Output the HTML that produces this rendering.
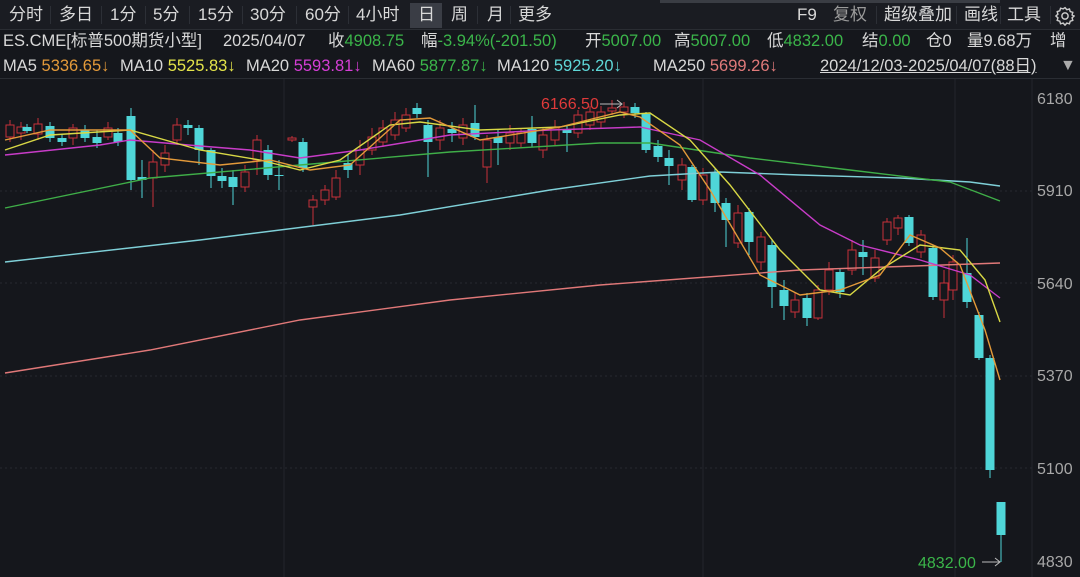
<!DOCTYPE html>
<html><head><meta charset="utf-8">
<style>
*{margin:0;padding:0;box-sizing:border-box}
body{width:1080px;height:577px;background:#15171c;overflow:hidden;position:relative;font-family:"Liberation Sans","Noto Sans CJK SC",sans-serif;color:#d8d8d8;font-size:16.5px}
.t{position:absolute;white-space:nowrap;line-height:22px}
.k{font-size:17px}
.g{color:#3bb54a}.o{color:#e39a3a}.y{color:#e4e44a}.m{color:#d53ed5}.c{color:#5fd8d8}.p{color:#e07a7a}
.sep{position:absolute;top:6px;width:1px;height:18px;background:#2c2f36}
</style></head><body>
<div style="position:absolute;left:0;top:0;width:1080px;height:30px;background:#1a1c22;border-bottom:1px solid #2a2d33"></div>
<div style="position:absolute;left:410px;top:3px;width:32px;height:25px;background:#3a3d45"></div>
<div style="position:absolute;left:660px;top:0;width:340px;height:3px;background:#3a3d44"></div>
<div class="t k" style="left:9px;top:4px">分时</div><div class="sep" style="left:50px"></div>
<div class="t k" style="left:59px;top:4px">多日</div><div class="sep" style="left:101px"></div>
<div class="t k" style="left:110px;top:4px">1分</div><div class="sep" style="left:145px"></div>
<div class="t k" style="left:153px;top:4px">5分</div><div class="sep" style="left:189px"></div>
<div class="t k" style="left:198px;top:4px">15分</div><div class="sep" style="left:242px"></div>
<div class="t k" style="left:250px;top:4px">30分</div><div class="sep" style="left:296px"></div>
<div class="t k" style="left:305px;top:4px">60分</div><div class="sep" style="left:348px"></div>
<div class="t k" style="left:356px;top:4px">4小时</div>
<div class="t k" style="left:418px;top:4px">日</div>
<div class="t k" style="left:451px;top:4px">周</div><div class="sep" style="left:477px"></div>
<div class="t k" style="left:487px;top:4px">月</div><div class="sep" style="left:510px"></div>
<div class="t k" style="left:518px;top:4px">更多</div>
<div class="t k" style="left:797px;top:4px">F9</div>
<div class="t k" style="left:833px;top:4px;color:#9a9a9a">复权</div><div class="sep" style="left:876px"></div>
<div class="t k" style="left:884px;top:4px">超级叠加</div><div class="sep" style="left:956px"></div>
<div class="t k" style="left:964px;top:4px">画线</div><div class="sep" style="left:1000px"></div>
<div class="t k" style="left:1007px;top:4px">工具</div><div class="sep" style="left:1050px"></div>
<svg style="position:absolute;left:1055px;top:6px" width="20" height="20" viewBox="0 0 18 18"><path d="M9 1.5l1.6 1.8 2.4-.6.7 2.3 2.3.7-.6 2.4L17.2 9l-1.8 1.6.6 2.4-2.3.7-.7 2.3-2.4-.6L9 17.2l-1.6-1.8-2.4.6-.7-2.3-2.3-.7.6-2.4L.8 9l1.8-1.6-.6-2.4 2.3-.7.7-2.3 2.4.6z" fill="none" stroke="#ccc" stroke-width="1.3"/><circle cx="9" cy="9" r="2.8" fill="none" stroke="#ccc" stroke-width="1.3"/></svg>

<div class="t" style="left:3px;top:30px">ES.CME[标普500期货小型]</div>
<div class="t" style="left:223px;top:30px">2025/04/07</div>
<div class="t" style="left:328px;top:30px">收<span class="g">4908.75</span></div>
<div class="t" style="left:421px;top:30px">幅<span class="g">-3.94%(-201.50)</span></div>
<div class="t" style="left:585px;top:30px">开<span class="g">5007.00</span></div>
<div class="t" style="left:674px;top:30px">高<span class="g">5007.00</span></div>
<div class="t" style="left:767px;top:30px">低<span class="g">4832.00</span></div>
<div class="t" style="left:862px;top:30px">结<span class="g">0.00</span></div>
<div class="t" style="left:926px;top:30px">仓0</div>
<div class="t" style="left:967px;top:30px">量9.68万</div>
<div class="t" style="left:1050px;top:30px">增</div>

<div class="t" style="left:3px;top:55px">MA5 <span class="o">5336.65↓</span></div>
<div class="t" style="left:120px;top:55px">MA10 <span class="y">5525.83↓</span></div>
<div class="t" style="left:246px;top:55px">MA20 <span class="m">5593.81↓</span></div>
<div class="t" style="left:372px;top:55px">MA60 <span class="g">5877.87↓</span></div>
<div class="t" style="left:497px;top:55px">MA120 <span class="c">5925.20↓</span></div>
<div class="t" style="left:653px;top:55px">MA250 <span class="p">5699.26↓</span></div>
<div class="t" style="left:820px;top:55px;text-decoration:underline">2024/12/03-2025/04/07(88日)</div>
<div class="t" style="left:1060px;top:55px;color:#aaa;font-size:16px">▼</div>
<div style="position:absolute;left:0;top:78px;width:1080px;height:1px;background:#2a2d33"></div>

<svg id="ch" style="position:absolute;left:0;top:0" width="1080" height="577">
<g stroke="#22252c" stroke-width="1">
<line x1="1032" y1="79" x2="1032" y2="577"/><line x1="955" y1="79" x2="955" y2="577"/><line x1="284" y1="79" x2="284" y2="577"/><line x1="703" y1="79" x2="703" y2="577"/>
</g>
<g stroke="#262930" stroke-dasharray="2,3">
<line x1="0" y1="191" x2="1032" y2="191"/><line x1="0" y1="283" x2="1032" y2="283"/><line x1="0" y1="376" x2="1032" y2="376"/><line x1="0" y1="468" x2="1032" y2="468"/>
</g>
<g fill="#a8a8a8" font-size="16" font-family="Liberation Sans">
<text x="1037" y="104">6180</text><text x="1037" y="196">5910</text><text x="1037" y="289">5640</text><text x="1037" y="381">5370</text><text x="1037" y="474">5100</text><text x="1037" y="567">4830</text>
</g>
<g id="cd"></g>
<g fill="none" stroke-width="1.4">
<polyline stroke="#e07878" points="5,373 150,350 300,320 450,300 600,285 800,270 1000,263"/>
<polyline stroke="#7fd0d8" points="5,262 200,240 400,215 550,190 650,176 720,172 800,175 900,178 970,182 1000,186"/>
<polyline stroke="#3fae48" points="5,208 150,178 300,165 450,152 600,143 650,143 750,158 850,170 950,182 1000,201"/>
<polyline stroke="#c83cc8" points="5,155 100,145 130,140 200,146 250,150 300,158 360,150 450,135 550,130 640,127 700,140 760,175 820,225 860,245 920,260 970,275 1000,298"/>
<polyline stroke="#d8d845" points="5,150 50,135 130,130 200,150 260,160 300,170 340,160 390,125 420,122 480,130 560,127 620,115 650,113 690,140 730,185 780,250 820,290 850,295 880,270 920,245 960,250 985,280 1000,322"/>
<polyline stroke="#e39a3a" points="5,140 50,130 130,130 160,158 220,165 270,160 310,170 350,165 400,120 430,118 480,140 560,127 620,112 640,117 680,145 710,190 760,275 800,295 840,290 880,275 910,235 940,248 960,265 985,330 1000,380"/>
</g>
<text x="541" y="109" fill="#e03a3a" font-size="16" font-family="Liberation Sans">6166.50</text>
<path d="M600 104h22M617 100l5 4-5 4" stroke="#bbb" fill="none"/>
<text x="918" y="568" fill="#3bb54a" font-size="16" font-family="Liberation Sans">4832.00</text>
<path d="M982 562h18M995 558l5 4-5 4" stroke="#bbb" fill="none"/>
</svg>
<script>
var C=[
[10,125,137,120,142,'r'],[21,127,133,122,140,'r'],[27,127,131,124,133,'c'],[38,124,134,118,140,'r'],[50,126,138,122,142,'c'],[62,138,142,134,146,'c'],[73,128,138,124,145,'r'],[85,130,138,125,142,'c'],[97,137,143,130,148,'c'],[108,128,137,122,140,'r'],[118,133,142,128,146,'c'],
[131,116,180,108,190,'c'],[142,177,180,160,198,'c'],[153,162,178,150,207,'r'],[165,153,165,145,172,'r'],[177,125,140,118,145,'r'],[188,125,128,120,135,'c'],[199,128,150,125,165,'c'],[211,150,176,148,188,'c'],[222,176,181,168,188,'c'],[233,177,187,170,205,'c'],[245,172,187,165,192,'r'],[257,140,160,135,175,'r'],[268,150,175,145,180,'c'],[279,175,176,160,190,'c'],[292,138,140,136,142,'r'],[303,142,168,138,172,'c'],[313,200,207,195,225,'r'],[325,190,200,185,205,'r'],[336,178,197,170,200,'r'],[348,163,170,155,178,'c'],
[360,150,165,140,175,'r'],[372,137,150,128,155,'r'],[383,128,142,120,147,'r'],[395,120,135,112,140,'r'],[406,115,128,108,132,'r'],[417,108,114,103,118,'c'],[428,125,142,120,177,'c'],[440,128,140,120,150,'r'],[452,129,133,122,142,'c'],[463,125,138,118,145,'r'],[475,123,137,105,140,'c'],[487,140,167,135,183,'r'],[498,137,143,130,165,'c'],[510,133,143,125,150,'r'],[521,133,143,128,148,'r'],[532,129,143,116,147,'c'],[543,135,150,128,158,'r'],[555,128,140,120,145,'r'],[567,129,133,125,152,'c'],[578,115,133,110,138,'r'],[590,112,125,106,130,'r'],[601,112,122,106,128,'r'],[612,108,111,100,115,'r'],[624,107,112,102,118,'r'],[635,107,113,103,118,'c'],[646,114,150,112,153,'c'],[658,146,157,140,162,'c'],[669,158,166,150,185,'c'],[682,165,180,158,190,'r'],[692,167,200,165,202,'c'],[703,175,200,168,205,'r'],[715,172,203,168,212,'c'],[726,203,220,198,247,'c'],[738,213,243,205,248,'r'],[749,212,242,208,255,'c'],[761,237,262,232,270,'r'],[772,245,287,240,308,'c'],[784,290,306,280,320,'c'],[795,300,312,292,318,'r'],[807,298,318,293,326,'c'],[818,290,318,285,320,'r'],[829,270,290,262,295,'r'],[840,272,292,268,298,'c'],[852,250,270,240,275,'r'],[863,252,257,240,275,'c'],[875,258,278,250,282,'r'],[887,222,240,218,245,'r'],[898,218,228,215,235,'r'],[909,217,243,215,246,'c'],[921,235,252,230,258,'r'],[933,248,297,245,300,'c'],[944,283,300,270,318,'r'],[953,262,290,255,300,'r'],[967,273,302,238,308,'c'],[979,315,358,312,360,'c'],[990,358,470,355,478,'c'],[1001,502,535,502,562,'c']];
var s='';C.forEach(function(d){var x=d[0],col=d[5]=='c'?'#4fd6d8':'#c8303a';
s+='<line x1="'+x+'" y1="'+d[3]+'" x2="'+x+'" y2="'+d[4]+'" stroke="'+col+'" stroke-width="1"/>';
if(d[5]=='c')s+='<rect x="'+(x-4.5)+'" y="'+d[1]+'" width="9" height="'+Math.max(1,d[2]-d[1])+'" fill="'+col+'"/>';
else s+='<rect x="'+(x-4)+'" y="'+d[1]+'" width="8" height="'+Math.max(1,d[2]-d[1])+'" fill="#15171c" stroke="'+col+'" stroke-width="1"/>';});
document.getElementById('cd').innerHTML=s;
</script>
</body></html>
